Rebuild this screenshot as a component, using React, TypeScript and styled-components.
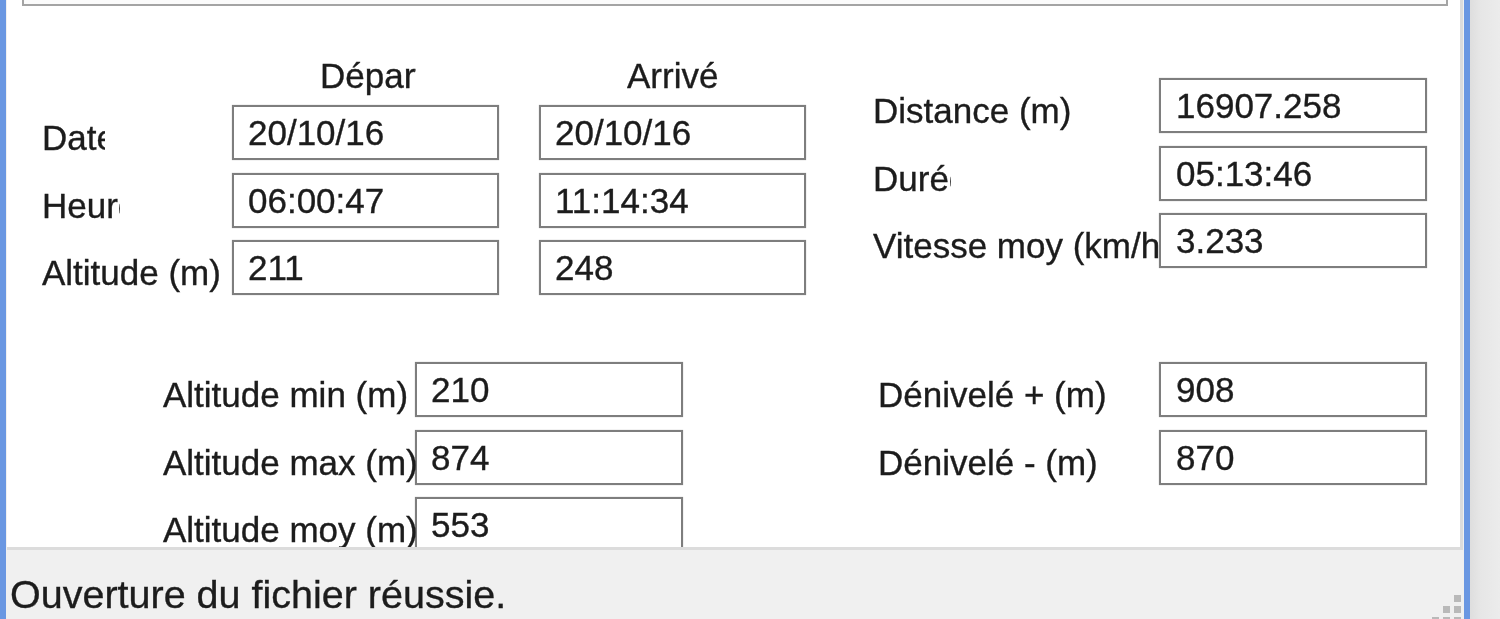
import React from "react";
import styled, { createGlobalStyle } from "styled-components";

const GlobalStyle = createGlobalStyle`
  html, body { margin: 0; padding: 0; }
  body {
    width: 1500px;
    height: 619px;
    overflow: hidden;
    background: #e7e7e7;
    font-family: "Liberation Sans", Arial, sans-serif;
    color: #1c1c1c;
    -webkit-text-stroke: 0.35px #1c1c1c;
  }
`;

const Desktop = styled.div`
  display: flex;
  width: 1500px;
  height: 619px;
  background: linear-gradient(to right, #dedede 1470px, #e6e6e6 1480px, #ececec 1500px);
  filter: blur(0.45px);
`;

const Window = styled.div`
  flex: none;
  width: 1470px;
  height: 619px;
  box-sizing: border-box;
  border-left: 6px solid #6a97e2;
  border-right: 6px solid #6a97e2;
  background: #f0f0f0;
  display: flex;
  flex-direction: column;
  position: relative;
`;

const Panel = styled.div`
  flex: none;
  height: 550px;
  box-sizing: border-box;
  margin: 0 1px;
  padding: 0 12px 0 15px;
  background: #ffffff;
  border-right: 3px solid #dcdcdc;
  border-bottom: 3px solid #dcdcdc;
  overflow: hidden;
`;

const GroupBoxEdge = styled.div`
  height: 6px;
  box-sizing: border-box;
  border: 2px solid #a4a4a4;
  border-top: none;
  background: #fbfbfb;
`;

const Section = styled.div<{ $top: number }>`
  display: flex;
  align-items: flex-start;
  margin-top: ${(p) => p.$top}px;
`;

const FormGrid = styled.div<{ $cols: string; $left: number; $top?: number }>`
  display: grid;
  grid-template-columns: ${(p) => p.$cols};
  grid-auto-rows: 55px;
  row-gap: 12.5px;
  margin-left: ${(p) => p.$left}px;
  margin-top: ${(p) => p.$top ?? 0}px;
  font-size: 35px;
`;

const DepartArriveGrid = styled(FormGrid)`
  grid-template-rows: 36.5px;
  column-gap: 40px;
`;

const HeaderLabel = styled.div<{ $clip: number }>`
  align-self: start;
  margin-left: 88px;
  width: ${(p) => p.$clip}px;
  overflow: hidden;
  white-space: nowrap;
  line-height: 40px;
`;

const RowLabel = styled.div<{ $clip?: number }>`
  position: relative;
  z-index: 1;
  align-self: start;
  margin-top: 13px;
  line-height: 40px;
  white-space: nowrap;
  ${(p) => (p.$clip ? `width: ${p.$clip}px; overflow: hidden;` : "")}
`;

const Field = styled.div<{ $pad?: number }>`
  box-sizing: border-box;
  height: 55px;
  display: flex;
  align-items: center;
  padding-left: ${(p) => p.$pad ?? 14}px;
  border: 2px solid #7e7e7e;
  box-shadow: 0 0 1px #b4b4b4;
  background: #ffffff;
  white-space: nowrap;
  line-height: 1;
`;

const StatusBar = styled.div`
  flex: 1;
  box-sizing: border-box;
  padding: 22px 0 0 4px;
  font-size: 39.5px;
  line-height: 44px;
  white-space: nowrap;
  overflow: hidden;
  position: relative;
`;

const Grip = styled.svg`
  position: absolute;
  right: 3px;
  bottom: 0;
`;

function SizeGrip() {
  const dots = [
    [22, 0],
    [11, 11],
    [22, 11],
    [0, 22],
    [11, 22],
    [22, 22],
  ];
  return (
    <Grip width="29" height="24" viewBox="0 0 29 24">
      {dots.map(([x, y]) => (
        <rect key={`${x}-${y}`} x={x} y={y} width="7" height="7" fill="#b9b9b9" />
      ))}
    </Grip>
  );
}

export default function App() {
  return (
    <>
      <GlobalStyle />
      <Desktop>
        <Window>
          <Panel>
            <GroupBoxEdge />
            <Section $top={0}>
              <DepartArriveGrid $cols="150px 267px 267px" $left={20} $top={50}>
                <div />
                <HeaderLabel $clip={96}>Départ</HeaderLabel>
                <HeaderLabel $clip={92}>Arrivée</HeaderLabel>

                <RowLabel $clip={63}>Date</RowLabel>
                <Field>20/10/16</Field>
                <Field>20/10/16</Field>

                <RowLabel $clip={78}>Heure</RowLabel>
                <Field>06:00:47</Field>
                <Field>11:14:34</Field>

                <RowLabel>Altitude (m)</RowLabel>
                <Field>211</Field>
                <Field>248</Field>
              </DepartArriveGrid>

              <FormGrid $cols="286px 268px" $left={67} $top={72}>
                <RowLabel>Distance (m)</RowLabel>
                <Field $pad={15}>16907.258</Field>

                <RowLabel $clip={78}>Durée</RowLabel>
                <Field $pad={15}>05:13:46</Field>

                <RowLabel $clip={286}>Vitesse moy (km/h)</RowLabel>
                <Field $pad={15}>3.233</Field>
              </FormGrid>
            </Section>

            <Section $top={67}>
              <FormGrid $cols="252px 268px" $left={141}>
                <RowLabel>Altitude min (m)</RowLabel>
                <Field>210</Field>

                <RowLabel>Altitude max (m)</RowLabel>
                <Field>874</Field>

                <RowLabel>Altitude moy (m)</RowLabel>
                <Field>553</Field>
              </FormGrid>

              <FormGrid $cols="281px 268px" $left={195}>
                <RowLabel>Dénivelé + (m)</RowLabel>
                <Field $pad={15}>908</Field>

                <RowLabel>Dénivelé - (m)</RowLabel>
                <Field $pad={15}>870</Field>
              </FormGrid>
            </Section>
          </Panel>
          <StatusBar>
            Ouverture du fichier réussie.
            <SizeGrip />
          </StatusBar>
        </Window>
      </Desktop>
    </>
  );
}
